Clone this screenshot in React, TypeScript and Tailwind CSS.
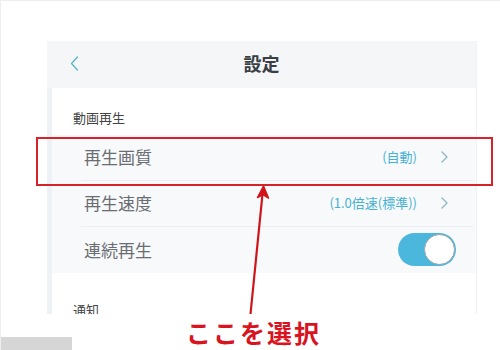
import React from "react";

const font = { fontFamily: '"Noto Sans CJK JP", "Noto Sans", sans-serif' };

function Chevron() {
  return (
    <svg width="7" height="12" viewBox="0 0 7 12" fill="none">
      <path d="M1 1l5 5-5 5" stroke="#8cb6c9" strokeWidth="1.3" strokeLinecap="round" strokeLinejoin="round" />
    </svg>
  );
}

function Row({
  label,
  value,
  last,
  children,
}: {
  label: string;
  value?: string;
  last?: boolean;
  children?: React.ReactNode;
}) {
  return (
    <div className={`ml-[29px] mr-[3px] flex h-[46px] items-center justify-between pl-[3px] ${last ? "" : "border-b border-[#eceef1]"}`}>
      <span className="text-[17px] text-[#6a6e73]">{label}</span>
      {children ?? (
        <div className="flex items-center">
          <span className="text-[13px] text-[#46b1d3]">{value}</span>
          <span className="ml-[24px] mr-[25px] flex">
            <Chevron />
          </span>
        </div>
      )}
    </div>
  );
}

export default function App() {
  return (
    <div className="relative h-[350px] w-[500px] overflow-hidden border-l border-t border-[#eeeeee] bg-white" style={font}>
      <div className="ml-[46px] mt-[40px] flex h-[273px] w-[430px] flex-col overflow-hidden border-r border-[#f0f1f3]">
        <div className="relative flex h-[47px] shrink-0 items-center justify-center bg-[#f4f6f8] pb-[3px]">
          <svg className="absolute left-[23px] top-[15px]" width="9" height="15" viewBox="0 0 9 15" fill="none">
            <path d="M7.5 1L1.5 7.5l6 6.5" stroke="#5fb3c9" strokeWidth="1.3" strokeLinecap="round" strokeLinejoin="round" />
          </svg>
          <span className="text-[18px] font-bold text-[#3a3f45]">設定</span>
        </div>
        <div className="flex flex-1">
          <div className="w-[5px] bg-[#edf2f7]" />
          <div className="flex flex-1 flex-col">
            <div className="pl-[21px] pt-[20px] text-[13px] text-[#444]">動画再生</div>
            <div className="mt-[7px] bg-[#f8f9fb]">
              <Row label="再生画質" value="(自動)" />
              <Row label="再生速度" value="(1.0倍速(標準))" />
              <Row label="連続再生" last>
                <div className="mr-[17px] flex h-[33px] w-[58px] items-center justify-end rounded-full bg-[#4cb7dc] pr-[1px]">
                  <div className="h-[31px] w-[31px] rounded-full border border-[#9aa6ad] bg-white" />
                </div>
              </Row>
            </div>
            <div className="pl-[21px] pt-[27px] text-[13px] text-[#444]">通知</div>
          </div>
        </div>
      </div>

      {/* annotation */}
      <div className="absolute left-[35px] top-[136px] h-[49px] w-[457px] border-2 border-[#d6232a]" />
      <svg className="absolute left-[240px] top-[180px]" width="40" height="140" viewBox="0 0 40 140" fill="none">
        <path d="M22 8L9.5 133" stroke="#d0141b" strokeWidth="2.2" />
        <path d="M22.5 5L16.5 16.5L22 13.5L27.5 17Z" fill="#d0141b" stroke="#d0141b" strokeWidth="1.5" strokeLinejoin="round" />
      </svg>
      <div className="absolute left-[185px] top-[313px] text-[25px] font-bold tracking-[2px] text-[#d9141e]">ここを選択</div>
      <div className="absolute bottom-0 left-0 h-[13px] w-[71px] bg-[#d6d6d6]" />
    </div>
  );
}
